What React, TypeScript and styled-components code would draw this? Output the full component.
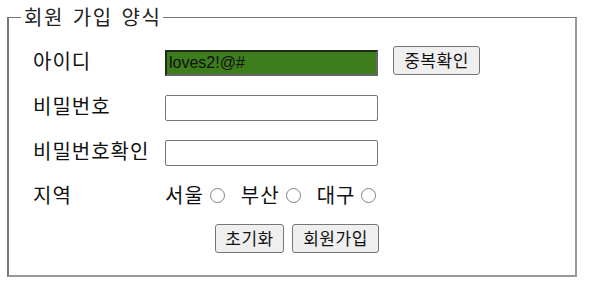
import { styled, createGlobalStyle } from 'styled-components';

const GlobalStyle = createGlobalStyle`
  html, body {
    margin: 0;
    padding: 0;
    background: #fff;
  }
  body {
    font-family: "Noto Sans CJK KR", "Noto Sans", sans-serif;
    color: #111;
  }
`;

const Page = styled.div`
  width: 589px;
  height: 289px;
  padding: 6px 12px 0 7px;
  box-sizing: border-box;
`;

const Fieldset = styled.fieldset`
  margin: 0;
  height: 271px;
  box-sizing: border-box;
  border-style: solid;
  border-color: #777 #999 #999 #777;
  border-width: 1px 2px 2px 2px;
  padding: 8px 14px 0 12px;
`;

const Legend = styled.legend`
  font-size: 20px;
  letter-spacing: 1.5px;
  word-spacing: 3px;
  padding: 0 2px 0 3px;
  margin-left: 0;
  line-height: 22px;
  color: #222;
`;

const Form = styled.div`
  display: grid;
  grid-template-columns: 132px auto 1fr;
  grid-template-rows: 45px 45px 45px 42px 44px;
  align-items: center;
  margin: 4px 0 0 12px;
`;

const Label = styled.div`
  font-size: 20px;
  letter-spacing: 1px;
  color: #111;
  padding-bottom: 4px;
`;

const TextInput = styled.input<{ $filled?: boolean }>`
  width: 213px;
  height: 26px;
  box-sizing: border-box;
  font-family: "Liberation Sans", Arial, sans-serif;
  font-size: 16px;
  padding: 0 2px;
  margin: 0;
  outline: none;
  background: ${(p) => (p.$filled ? '#3d7d1c' : '#fff')};
  color: #111;
  border-style: solid;
  border-width: ${(p) => (p.$filled ? '2px' : '1px')};
  border-color: ${(p) => (p.$filled ? '#1e2a1a #666 #666 #1e2a1a' : '#767676')};
  border-radius: ${(p) => (p.$filled ? '0' : '2px')};
`;

const Button = styled.button<{ $w: number }>`
  width: ${(p) => p.$w}px;
  height: 29px;
  box-sizing: border-box;
  font-family: "Noto Sans CJK KR", sans-serif;
  font-size: 17px;
  letter-spacing: 0.5px;
  color: #111;
  background: #efefef;
  border: 1px solid #767676;
  border-radius: 3px;
  padding: 0 0 2px;
  margin: 0;
  line-height: 1;
`;

const Side = styled.div`
  padding-left: 15px;
  padding-bottom: 4px;
  display: flex;
  align-items: center;
`;

const RadioGroup = styled.div`
  grid-column: 2 / 4;
  display: flex;
  align-items: center;
  font-size: 20px;
  letter-spacing: 1px;
  padding-bottom: 4px;
`;

const RadioItem = styled.label`
  display: flex;
  align-items: center;
  margin-right: 16px;
`;

const Radio = styled.span`
  width: 13px;
  height: 13px;
  border: 1px solid #808080;
  border-radius: 50%;
  margin-left: 6px;
  margin-top: 3px;
  box-sizing: content-box;
`;

const Actions = styled.div`
  grid-column: 1 / 4;
  display: flex;
  justify-content: center;
  gap: 8px;
  padding: 0 0 2px 0;
`;

export default function App() {
  return (
    <Page>
      <GlobalStyle />
      <Fieldset>
        <Legend>회원 가입 양식</Legend>
        <Form>
          <Label>아이디</Label>
          <TextInput $filled defaultValue="loves2!@#" />
          <Side>
            <Button $w={87}>중복확인</Button>
          </Side>

          <Label>비밀번호</Label>
          <TextInput type="password" />
          <div />

          <Label>비밀번호확인</Label>
          <TextInput type="password" />
          <div />

          <Label>지역</Label>
          <RadioGroup>
            {['서울', '부산', '대구'].map((city) => (
              <RadioItem key={city}>
                {city}
                <Radio />
              </RadioItem>
            ))}
          </RadioGroup>

          <Actions>
            <Button $w={69}>초기화</Button>
            <Button $w={87}>회원가입</Button>
          </Actions>
        </Form>
      </Fieldset>
    </Page>
  );
}
